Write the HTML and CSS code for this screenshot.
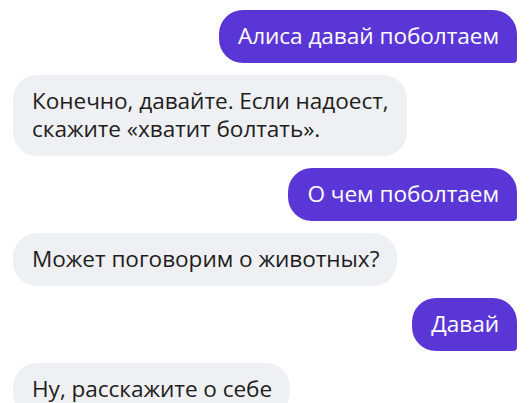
FILE: index.html
```
<!DOCTYPE html>
<html>
<head>
    <meta charset="utf-8">
    <title>Алиса</title>
    <link rel="stylesheet" href="styles.css">
</head>
<body>
    <div class="chat">
        <div class="msg user">Алиса давай поболтаем</div>
        <div class="msg bot">Конечно, давайте. Если надоест,<br>скажите «хватит болтать».</div>
        <div class="msg user">О чем поболтаем</div>
        <div class="msg bot">Может поговорим о животных?</div>
        <div class="msg user">Давай</div>
        <div class="msg bot">Ну, расскажите о себе</div>
    </div>
</body>
</html>
```

FILE: styles.css
```
body { margin: 0; background: #fff; font-family: "Open Sans", "Noto Sans", sans-serif; }
.chat { display: flex; flex-direction: column; gap: 12px; padding: 10px 12px 0 13px; }
.msg { font-size: 22.6px; line-height: 28px; padding: 12px 18px 13px 19px; border-radius: 24px; max-width: 420px; letter-spacing: -0.05px; }
.user { align-self: flex-end; background: #5b36d6; color: #fff; border-bottom-right-radius: 4px; }
.bot { align-self: flex-start; background: #eff0f3; color: #1d1d1d; }
```
